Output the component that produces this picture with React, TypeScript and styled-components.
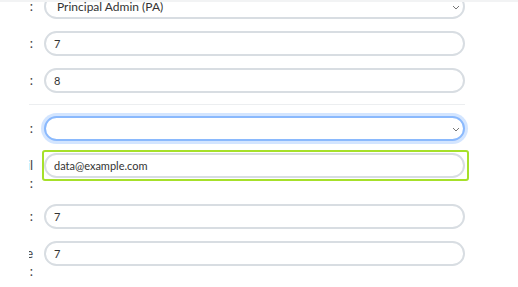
import React from "react";
import styled, { createGlobalStyle, css } from "styled-components";

const Global = createGlobalStyle`
  html, body { margin: 0; padding: 0; background: #fff; }
  body { font-family: Lato, "Open Sans", sans-serif; color: #333; }
`;

const Frame = styled.div`
  height: 287px;
  overflow: hidden;
  border-top: 2px solid #f2f3f4;
  box-sizing: border-box;
  padding-left: 29px;
`;

// the label column runs off to the left and is clipped here
const Clip = styled.div`
  overflow: hidden;
  height: 100%;
`;

// scrolled a little: the first row sits partly under the header
const Form = styled.div`
  display: flex;
  flex-direction: column;
  gap: 12px;
  margin-top: -8px;
  margin-left: -116px;
  padding-right: 53px;
`;

const Row = styled.div`
  display: grid;
  grid-template-columns: 120px 1fr;
  column-gap: 11px;
  align-items: start;
`;

const Label = styled.label`
  text-align: right;
  font-size: 13px;
  line-height: 18px;
  padding-top: 3px;
  color: #444;
`;

const Divider = styled.hr`
  border: 0;
  border-top: 1px solid #eceef0;
  margin: -1px 0;
`;

const fieldBase = css`
  box-sizing: border-box;
  width: 100%;
  height: 25px;
  border: 2px solid #d8dde2;
  border-radius: 13px;
  font-family: Lato, "Open Sans", sans-serif;
  color: #333;
  background: #fff;
  outline: none;
`;

const Input = styled.input`
  ${fieldBase}
  padding: 0 8px;
  font-size: 11px;
`;

const SelectWrap = styled.div`
  position: relative;
`;

const Select = styled.select<{ $focus?: boolean }>`
  ${fieldBase}
  appearance: none;
  padding: 0 11px;
  font-size: 12px;
  ${(p) =>
    p.$focus &&
    css`
      border-color: #8ab9fd;
      box-shadow: 0 0 0 3px rgba(13, 110, 253, 0.18);
    `}
`;

const Chevron = styled.svg`
  position: absolute;
  right: 5px;
  top: 50%;
  margin-top: -2px;
  pointer-events: none;
`;

const Highlight = styled.div`
  position: relative;
  &::after {
    content: "";
    position: absolute;
    inset: -3px -4px -3px -2px;
    border: 2px solid #a6e02a;
    border-radius: 3px;
    pointer-events: none;
  }
`;

function Arrow() {
  return (
    <Chevron width="8" height="5" viewBox="0 0 8 5">
      <path d="M1 1l3 3 3-3" fill="none" stroke="#777" strokeWidth="1" />
    </Chevron>
  );
}

export default function App() {
  return (
    <>
      <Global />
      <Frame>
        <Clip>
          <Form>
            <Row>
              <Label>Role :</Label>
              <SelectWrap>
                <Select defaultValue="pa">
                  <option value="pa">Principal Admin (PA)</option>
                </Select>
                <Arrow />
              </SelectWrap>
            </Row>
            <Row>
              <Label>Level :</Label>
              <Input defaultValue="7" />
            </Row>
            <Row>
              <Label>Grade :</Label>
              <Input defaultValue="8" />
            </Row>
            <Divider />
            <Row>
              <Label>Type :</Label>
              <SelectWrap>
                <Select $focus defaultValue="">
                  <option value=""></option>
                </Select>
                <Arrow />
              </SelectWrap>
            </Row>
            <Row>
              <Label>
                Contact Email
                <br />:
              </Label>
              <Highlight>
                <Input defaultValue="data@example.com" />
              </Highlight>
            </Row>
            <Row>
              <Label>Limit :</Label>
              <Input defaultValue="7" />
            </Row>
            <Row>
              <Label>
                Maximum Age
                <br />:
              </Label>
              <Input defaultValue="7" />
            </Row>
          </Form>
        </Clip>
      </Frame>
    </>
  );
}
